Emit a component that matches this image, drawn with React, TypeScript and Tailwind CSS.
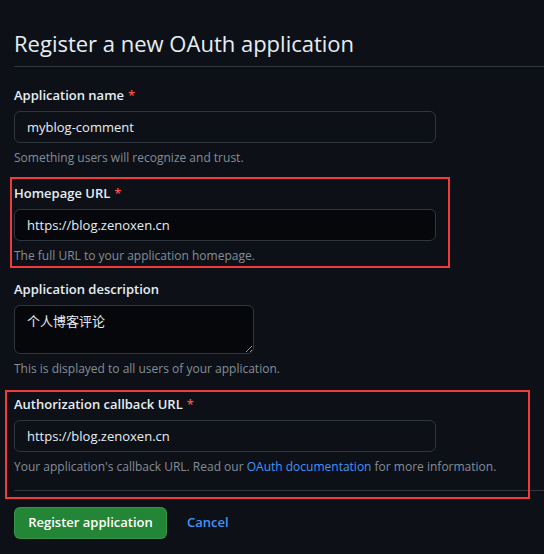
import React from 'react'

const font = { fontFamily: '"Open Sans", "Noto Sans", "Noto Sans CJK SC", sans-serif' }

function Label({ text, required }: { text: string; required?: boolean }) {
  return (
    <label className="block text-[13px] leading-[21px] font-semibold text-[#e6edf3]">
      {text}
      {required && <span className="ml-[4px] text-[#f85149]">*</span>}
    </label>
  )
}

function Note({ children }: { children: React.ReactNode }) {
  return <p className="mt-[6px] text-[12px] leading-[18px] text-[#848d97]">{children}</p>
}

function TextInput({ value, dark }: { value: string; dark?: boolean }) {
  return (
    <input
      readOnly
      value={value}
      className={`mt-[5px] block h-[32px] w-[422px] rounded-[6px] border border-[#30363d] px-[12px] text-[13px] text-[#e6edf3] outline-none ${
        dark ? 'bg-[#05070b]' : 'bg-[#0d1117]'
      }`}
      style={font}
    />
  )
}

export default function App() {
  return (
    <div className="relative min-h-[554px] w-[544px] overflow-hidden bg-[#0d1117]" style={font}>
      {/* Header */}
      <div className="ml-[14px] border-b border-[#30363d] pt-[28px] pb-[8px]">
        <h1 className="text-[22px] leading-[30px] font-normal text-[#e6edf3]">Register a new OAuth application</h1>
      </div>

      <form className="px-[14px]">
        <div className="mt-[18px]">
          <Label text="Application name" required />
          <TextInput value="myblog-comment" />
          <Note>Something users will recognize and trust.</Note>
        </div>

        <div className="mt-[16px]">
          <Label text="Homepage URL" required />
          <TextInput value="https://blog.zenoxen.cn" dark />
          <Note>The full URL to your application homepage.</Note>
        </div>

        <div className="mt-[14px]">
          <Label text="Application description" />
          <textarea
            readOnly
            value="个人博客评论"
            className="mt-[5px] block h-[49px] w-[240px] resize rounded-[6px] border border-[#30363d] bg-[#05070b] px-[12px] py-[5px] text-[13px] leading-[20px] text-[#e6edf3] outline-none"
            style={font}
          />
          <Note>This is displayed to all users of your application.</Note>
        </div>

        <div className="mt-[16px]">
          <Label text="Authorization callback URL" required />
          <TextInput value="https://blog.zenoxen.cn" />
          <Note>
            Your application's callback URL. Read our{' '}
            <a className="text-[#4493f8]">OAuth documentation</a> for more information.
          </Note>
        </div>

        <div className="mt-[14px] -mr-[14px] border-t border-[#30363d] pt-[16px] flex items-center gap-[20px]">
          <button
            type="button"
            className="h-[32px] w-[153px] rounded-[6px] border border-[#ffffff1a] bg-[#238636] text-[13px] font-semibold text-white"
          >
            Register application
          </button>
          <a className="text-[13px] font-semibold text-[#4493f8]">Cancel</a>
        </div>
      </form>

      {/* Annotation boxes */}
      <div className="pointer-events-none absolute left-[10px] top-[177px] h-[91px] w-[440px] border-2 border-[#f13a3a]" />
      <div className="pointer-events-none absolute left-[5px] top-[390px] h-[109px] w-[525px] border-2 border-[#f13a3a]" />
    </div>
  )
}
